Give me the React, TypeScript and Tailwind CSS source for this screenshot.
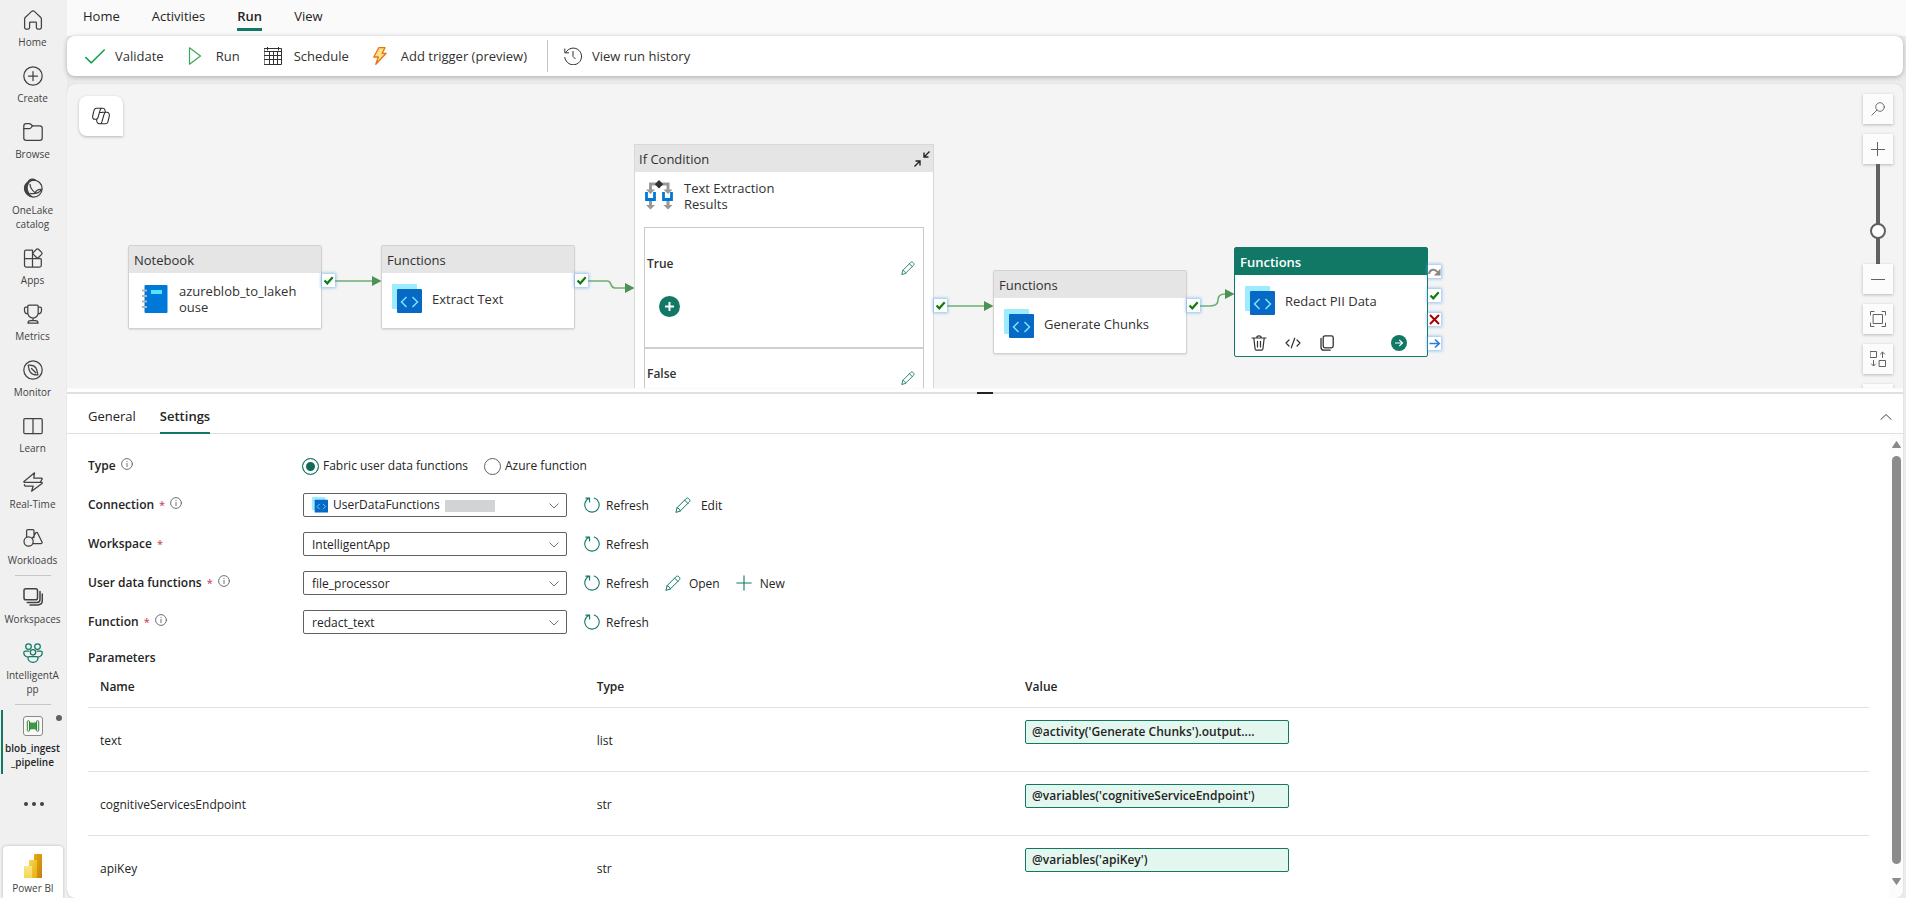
import React from "react";

type IconProps = { className?: string };

function Line({
  children,
  className = "size-5",
  box = "0 0 20 20",
  width = 1.25,
}: {
  children: React.ReactNode;
  className?: string;
  box?: string;
  width?: number;
}) {
  return (
    <svg
      viewBox={box}
      className={`shrink-0 ${className}`}
      fill="none"
      stroke="currentColor"
      strokeWidth={width}
      strokeLinecap="round"
      strokeLinejoin="round"
      aria-hidden="true"
    >
      {children}
    </svg>
  );
}

/* ---------- Navigation rail icons ---------- */

const HomeIcon = () => (
  <Line>
    <path d="M1.6 9c0-.6.2-1.1.6-1.5l6.2-5.9c.9-.9 2.3-.9 3.2 0l6.2 5.9c.4.4.6.9.6 1.5v8.6c0 .8-.6 1.4-1.4 1.4h-2.2c-.8 0-1.4-.6-1.4-1.4v-4.8c0-.5-.3-.8-.8-.8H7.4c-.5 0-.8.3-.8.8v4.8c0 .8-.6 1.4-1.4 1.4H3c-.8 0-1.4-.6-1.4-1.4z" />
  </Line>
);
const CreateIcon = () => (
  <Line>
    <circle cx="10" cy="10" r="9.2" />
    <path d="M10 5.5v9M5.5 10h9" />
  </Line>
);
const BrowseIcon = () => (
  <Line>
    <path d="M.8 4c0-1.300 1-2.300 2.300-2.300h3.300c.6 0 1 .2 1.400.6l1.500 1.500h7.600c1.300 0 2.300 1 2.300 2.300V16c0 1.300-1 2.300-2.300 2.300H3.100C1.800 18.300.8 17.300.8 16z" />
    <path d="M.8 6.700h5.400c.6 0 1-.2 1.400-.6l2-2.300" />
  </Line>
);
const OneLakeIcon = () => (
  <Line>
    <circle cx="10.5" cy="10.6" r="8.6" />
    <path
      d="M10.300 19.200C5.200 19 1 15.500.9 10.300.8 7.500 2.300 5.200 4.500 4 5 1.600 7.400.3 9.700.5c2 .1 3.500 1.200 4.200 2.600-3-.8-6.400.2-7.500 1.700-2 2.600-2.200 6.400-.6 9.200 1.200 2.200 2.700 3.800 4.500 5.200z"
      fill="currentColor"
      stroke="none"
    />
    <path d="M7 6.300c.3 3.300 2.400 6.400 5.400 8.700M7.500 15.500c4.200.6 8.800-.6 11.200-3.800M12.400 14.600c.8-2 3-3.400 6-3.200" />
  </Line>
);
const AppsIcon = () => (
  <Line>
    <path d="M1.500 3.800c0-1 .8-1.800 1.800-1.800H9.500v17H3.300c-1 0-1.800-.8-1.800-1.800zM1.500 10.500h16c.2 0 .8.300.8 1v5.700c0 1-.8 1.800-1.800 1.800H9.500" />
    <path
      d="M13.500 1.300a1.400 1.400 0 0 1 2 0l3.100 3.100a1.400 1.400 0 0 1 0 2l-3.100 3.100a1.400 1.400 0 0 1-2 0l-3.100-3.100a1.400 1.400 0 0 1 0-2z"
      fill="#f0f0f0"
    />
  </Line>
);
const MetricsIcon = () => (
  <Line>
    <path d="M4.800 2.300c0-.6.5-1.100 1.100-1.100h8.200c.6 0 1.100.5 1.100 1.100v6.500a5.200 5.200 0 0 1-10.400 0zM4.800 3H2.900c-.8 0-1.400.6-1.400 1.400v1.800c0 2 1.500 3.600 3.500 3.600M15.200 3h1.900c.8 0 1.400.6 1.400 1.400v1.800c0 2-1.500 3.600-3.500 3.600M10 14v2.500M7.500 16.500h5c1.400 0 2.500.8 2.500 2.700H5c0-1.900 1.100-2.700 2.500-2.700z" />
  </Line>
);
const MonitorIcon = () => (
  <Line>
    <circle cx="10" cy="10" r="9.2" />
    <path d="M5.200 5.200c3.600-.4 6.400.6 7.700 2.700 1.200 2 1.600 4.400 2 6.900-3.200.3-5.900-.4-7.500-2.500-1.400-1.900-1.900-4.500-2.200-7.100zM8.500 8.500l4.300 4.300" />
  </Line>
);
const LearnIcon = () => (
  <Line>
    <rect x=".8" y="2.6" width="18.4" height="15" rx="1.2" />
    <path d="M10 2.600v15" />
  </Line>
);
const RealTimeIcon = () => (
  <Line>
    <path d="M11.500.8 1 9.400c-.5.4-.2 1 .4 1h17.200c.7 0 .9.600.4 1L8.600 19.200l1.600-5.200H2.500c-1 0-1.400-.5-.9-1.300M11.500.8 10.800 6.200h7.800c.6 0 .8.500.5.9l-1.800 3.100" />
  </Line>
);
const WorkloadsIcon = () => (
  <Line>
    <circle cx="5.6" cy="13.5" r="4.600" />
    <path d="M3.600 9V2.800c0-.7.500-1.200 1.200-1.200h5c.7 0 1.200.5 1.200 1.200v6.800M9.200 10.700l3.700-6c.4-.6 1.100-.6 1.500 0L19 14c.4.800 0 1.500-.8 1.500h-7.900" />
  </Line>
);
const WorkspacesIcon = () => (
  <Line width={1.5}>
    <rect x="1" y="1.700" width="13.500" height="11" rx="1.800" />
    <path d="M17 4.500v8c0 1.700-1 2.900-2.900 2.900H4.200M19.300 7v6.300c0 2.800-1.600 4.600-4.500 4.600H7" />
  </Line>
);
const PeopleIcon = () => (
  <Line className="size-5 text-[#117865]">
    <circle cx="5.5" cy="3.6" r="2.8" />
    <circle cx="14.5" cy="3.6" r="2.8" />
    <circle cx="10" cy="9.3" r="2.700" />
    <path d="M5.800 8.200H2.300C1.400 8.200.8 8.800.8 9.600c0 2.100 1.500 4.200 4.200 4.500M14.200 8.200h3.500c.9 0 1.500.6 1.500 1.400 0 2.100-1.500 4.200-4.200 4.500M6.300 13.700h7.400c.8 0 1.300.5 1.300 1.300 0 2.500-2.200 4.300-5 4.300s-5-1.800-5-4.300c0-.8.500-1.300 1.300-1.300z" />
  </Line>
);
const PipelineIcon = () => (
  <svg viewBox="0 0 20 20" className="size-5 shrink-0" aria-hidden="true">
    <rect x=".5" y=".5" width="19" height="19" rx="2.5" fill="#f8f8f8" stroke="#8a8a8a" />
    <path d="M6 5.800c2 1.200 6 1.200 8 0v8.400c-2-1.200-6-1.200-8 0z" fill="#3f9a45" />
    <rect x="4.300" y="4.700" width="2.200" height="10.600" rx=".9" fill="#e9f5ea" stroke="#35813b" />
    <rect x="13.500" y="4.700" width="2.200" height="10.600" rx=".9" fill="#e9f5ea" stroke="#35813b" />
  </svg>
);
const PowerBiIcon = () => (
  <svg viewBox="0 0 20 24" className="h-6 w-5 shrink-0" aria-hidden="true">
    <defs>
      <linearGradient id="pbi-a" x1="0" y1="0" x2="1" y2="1">
        <stop stopColor="#e6ad10" />
        <stop offset="1" stopColor="#c87e0e" />
      </linearGradient>
      <linearGradient id="pbi-b" x1="0" y1="0" x2="1" y2="1">
        <stop stopColor="#f6d751" />
        <stop offset="1" stopColor="#e6ad10" />
      </linearGradient>
      <linearGradient id="pbi-c" x1="0" y1="0" x2="0" y2="1">
        <stop stopColor="#f9e589" />
        <stop offset="1" stopColor="#f6d751" />
      </linearGradient>
    </defs>
    <path d="M11 .5a.5.5 0 0 1 .5-.5h7a.5.5 0 0 1 .5.5V24h-8z" fill="url(#pbi-a)" />
    <path d="M6 6.500a.5.500 0 0 1 .5-.5h7a.5.500 0 0 1 .5.500V24H6z" fill="url(#pbi-b)" />
    <path d="M1 12.500a.5.500 0 0 1 .5-.5h7a.5.500 0 0 1 .5.500V24H1z" fill="url(#pbi-c)" />
  </svg>
);

/* ---------- Shared icons ---------- */

const PencilIcon = ({ className = "size-4" }: IconProps) => (
  <Line className={`text-[#117865] ${className}`} box="0 0 16 16" width={1}>
    <path d="M1 15l1.100-4.300L11 1.700c.8-.8 2-.8 2.800 0l.5.500c.8.8.8 2 0 2.800L5.300 13.900zM9.600 3.100l3.300 3.300M2.100 10.700c1.500.3 2.800 1.600 3.200 3.200" />
  </Line>
);
const RefreshIcon = () => (
  <Line className="size-4 text-[#117865]" box="0 0 16 16" width={1.1}>
    <path d="M5.200 1.300a7.200 7.200 0 1 0 5 -.2M1.800 1.100h3.800v3.800" />
  </Line>
);
const PlusIcon = ({ className = "size-4" }: IconProps) => (
  <Line className={className} box="0 0 16 16" width={1.1}>
    <path d="M8 .8v14.400M.8 8h14.400" />
  </Line>
);
const InfoIcon = () => (
  <Line className="size-3 text-[#616161]" box="0 0 12 12" width={0.9}>
    <circle cx="6" cy="6" r="5.400" />
    <path d="M6 5.300v3.300M6 3.300v.2" />
  </Line>
);
const FunctionIcon = ({ className = "size-[30px]" }: IconProps) => (
  <svg viewBox="0 0 30 30" className={`shrink-0 ${className}`} aria-hidden="true">
    <rect width="25" height="25" rx="1" fill="#9cebff" />
    <rect x="5" y="5" width="25" height="24" rx="1" fill="#0669c5" />
    <path d="M14.500 13 9.500 18l5 5M20.500 13l5 5-5 5" fill="none" stroke="#7fe3ff" strokeWidth="1.5" />
  </svg>
);
const NotebookIcon = () => (
  <svg viewBox="0 0 26 28" className="h-7 w-[26px] shrink-0" aria-hidden="true">
    <rect x="2.5" width="23" height="28" rx="1" fill="#0078d7" />
    <path d="M9 5h11v4H9z" fill="#50e6ff" />
    <path d="M0 5.500h5M0 11h5M0 16.500h5M0 22h5" stroke="#b3b3b3" strokeWidth="1.800" />
  </svg>
);
const BranchIcon = () => (
  <svg viewBox="0 0 28 30" className="h-[30px] w-7 shrink-0" aria-hidden="true">
    <path d="M12 4H5.500v6M16 4h7v6" fill="none" stroke="#999" strokeWidth="3" />
    <path d="M1 9.500h9L5.500 14zM18.500 9.500h9L23 14zM1 25h9l-4.500 4.500zM18.500 25h9L23 29.500z" fill="#999" />
    <path d="M5.500 20v6M23 20v6" stroke="#999" strokeWidth="3" />
    <path d="M1.500 12v7.500h8V12M18.500 12v7.500h8V12" fill="none" stroke="#0078d7" strokeWidth="2.800" />
    <path d="M14 0l4.200 4.200L14 8.400 9.800 4.200z" fill="#333" />
  </svg>
);

/* ---------- Navigation rail ---------- */

type RailItem = { label: string; Icon: () => React.JSX.Element };

const mainItems: RailItem[] = [
  { label: "Home", Icon: HomeIcon },
  { label: "Create", Icon: CreateIcon },
  { label: "Browse", Icon: BrowseIcon },
  { label: "OneLake catalog", Icon: OneLakeIcon },
  { label: "Apps", Icon: AppsIcon },
  { label: "Metrics", Icon: MetricsIcon },
  { label: "Monitor", Icon: MonitorIcon },
  { label: "Learn", Icon: LearnIcon },
  { label: "Real-Time", Icon: RealTimeIcon },
  { label: "Workloads", Icon: WorkloadsIcon },
];
const workspaceItems: RailItem[] = [
  { label: "Workspaces", Icon: WorkspacesIcon },
  { label: "IntelligentApp", Icon: PeopleIcon },
];

function RailButton({ item, active = false }: { item: RailItem; active?: boolean }) {
  return (
    <button
      type="button"
      className={`relative flex w-full flex-col items-center gap-[5px] pt-2.5 pr-1.5 pb-[7px] pl-1 text-[10px] leading-[14px] ${
        active ? "font-semibold text-[#242424]" : "text-[#424242]"
      }`}
    >
      <item.Icon />
      <span className="max-w-full text-center break-words">{item.label}</span>
      {active && (
        <>
          <span className="absolute top-1 bottom-0.5 left-px w-0.5 bg-[#117865]" />
          <span className="absolute top-[9px] right-[5px] size-1.5 rounded-full bg-[#616161]" />
        </>
      )}
    </button>
  );
}

const RailDivider = () => <div className="mx-[15px] my-px h-px w-9 shrink-0 bg-[#c7c7c7]" />;

function Rail() {
  return (
    <nav className="flex w-[67px] shrink-0 flex-col overflow-hidden bg-[#f0f0f0]">
      {mainItems.map((item) => (
        <RailButton key={item.label} item={item} />
      ))}
      <RailDivider />
      {workspaceItems.map((item) => (
        <RailButton key={item.label} item={item} />
      ))}
      <RailDivider />
      <RailButton item={{ label: "blob_ingest _pipeline", Icon: PipelineIcon }} active />
      <button type="button" aria-label="More" className="mt-[18px] flex h-5 items-center justify-center gap-1">
        <span className="size-1 rounded-full bg-[#424242]" />
        <span className="size-1 rounded-full bg-[#424242]" />
        <span className="size-1 rounded-full bg-[#424242]" />
      </button>
      <button
        type="button"
        className="mt-auto mr-1 ml-[3px] flex flex-col items-center gap-[3px] rounded-t bg-white pt-2 pb-[3px] text-[10px] leading-[14px] text-[#424242] shadow-[0_0_3px_rgba(0,0,0,0.25)]"
      >
        <PowerBiIcon />
        Power BI
      </button>
    </nav>
  );
}

/* ---------- Ribbon ---------- */

const ribbonTabs = ["Home", "Activities", "Run", "View"];

function RibbonTabs() {
  return (
    <div className="flex h-9 shrink-0 items-start gap-8 bg-[#fafafa] px-4 pt-1 text-[13px] leading-6 text-[#242424]">
      {ribbonTabs.map((tab) => (
        <button
          type="button"
          key={tab}
          className={tab === "Run" ? "border-b-3 border-[#117865] font-semibold" : "border-b-3 border-transparent"}
        >
          {tab}
        </button>
      ))}
    </div>
  );
}

function Action({ icon, label, pad }: { icon: React.ReactNode; label: string; pad: string }) {
  return (
    <button type="button" className={`flex items-center ${pad}`}>
      {icon}
      <span className="pt-0.5">{label}</span>
    </button>
  );
}

function Ribbon() {
  return (
    <div className="relative mr-[3px] flex h-10 shrink-0 items-center gap-6 rounded-lg bg-white px-[18px] text-[13px] text-[#323130] shadow-[0_1px_5px_rgba(0,0,0,0.28)]">
      <Action
        label="Validate"
        pad="gap-2.5"
        icon={
          <Line className="size-5 text-[#13a04b]" width={1.6}>
            <path d="M.8 11.500 6.300 16.800 19.200 4" />
          </Line>
        }
      />
      <Action
        label="Run"
        pad="gap-3.5"
        icon={
          <Line className="h-[18px] w-3.5 text-[#3aa655]" box="0 0 14 18" width={1.2}>
            <path d="M1.500.8v16.400L12.500 9z" />
          </Line>
        }
      />
      <Action
        label="Schedule"
        pad="gap-3"
        icon={
          <Line className="size-[18px]" box="0 0 18 18" width={1}>
            <path d="M.5 1.500h17v16H.5zM.5 4.500h17M3.500 0v3M14.500 0v3M.5 8.500h17M.5 12.500h17M5.500 4.500v13M9.500 4.500v13M13.500 4.500v13" />
          </Line>
        }
      />
      <Action
        label="Add trigger (preview)"
        pad="gap-3.5"
        icon={
          <svg viewBox="0 0 14 18" className="h-[18px] w-3.5 shrink-0" aria-hidden="true">
            <path
              d="M5.800.7H12L9.200 6.300h4L2.800 17.300 5.300 10H.8z"
              fill="#fde08a"
              stroke="#e8720c"
              strokeWidth="1.300"
              strokeLinejoin="round"
            />
          </svg>
        }
      />
      <span className="-mx-1 h-8 w-px bg-[#c8c6c4]" />
      <Action
        label="View run history"
        pad="-ml-1 gap-2.5"
        icon={
          <Line className="size-[18px]" box="0 0 18 18" width={1}>
            <path d="M1.700 5.500a8.400 8.400 0 1 1-.9 5M.8 2v3.800h3.800M9 4.500v5l2.300 2.300" />
          </Line>
        }
      />
    </div>
  );
}

/* ---------- Pipeline canvas ---------- */

function Port({ kind, place }: { kind: "skip" | "ok" | "fail" | "done"; place: string }) {
  return (
    <span
      className={`absolute flex size-[13px] items-center justify-center bg-white shadow-[0_0_3px_1px_rgba(80,160,235,0.6)] ${place}`}
    >
      <svg viewBox="0 0 13 13" className="size-[13px]" fill="none" aria-hidden="true">
        {kind === "ok" && <path d="M2.500 6.500 5.300 9.300 10.700 3.300" stroke="#107c10" strokeWidth="2.200" />}
        {kind === "fail" && <path d="M2 2l9 9M11 2l-9 9" stroke="#a80000" strokeWidth="2" />}
        {kind === "skip" && (
          <>
            <path d="M1 9c.5-4.500 5.500-6 8.500-2" stroke="#8a8886" strokeWidth="2" />
            <path d="M12.500 3.500v7H6z" fill="#8a8886" />
          </>
        )}
        {kind === "done" && <path d="M1.500 6.500h9.500M7 2.500l4.200 4L7 10.500" stroke="#2b7cd3" strokeWidth="1.700" />}
      </svg>
    </span>
  );
}

function Activity({
  type,
  name,
  icon,
  place,
  selected = false,
}: {
  type: string;
  name: string;
  icon: React.ReactNode;
  place: string;
  selected?: boolean;
}) {
  return (
    <div
      className={`absolute flex w-[194px] flex-col rounded-xs border bg-white text-[13px] ${
        selected ? "border-[#117865]" : "border-[#d1d1d1] shadow-[0_1px_2px_rgba(0,0,0,0.1)]"
      } ${place}`}
    >
      <div
        className={`flex h-[27px] shrink-0 items-center px-[5px] pt-0.5 ${
          selected ? "bg-[#117865] font-semibold text-white" : "bg-[#e5e5e5] text-[#323130]"
        }`}
      >
        {type}
      </div>
      <div className="flex h-[52px] items-center gap-2.5 px-2.5 leading-4 text-[#323130]">
        {icon}
        <span className="w-[122px] break-all">{name}</span>
      </div>
      {selected && (
        <div className="flex items-center px-4 pt-2 text-[#323130]">
          <button type="button" aria-label="Delete" className="mr-[18px]">
            <Line className="size-4" box="0 0 16 16" width={1.2}>
              <path d="M1 3h14M2.800 3l1.300 11c.1.700.6 1.200 1.300 1.200h5.200c.7 0 1.200-.5 1.300-1.200L13.200 3M5.800 2.800c0-1.300.8-2 2.200-2s2.200.7 2.200 2M6.500 6.300v5.700M9.500 6.300v5.700" />
            </Line>
          </button>
          <button type="button" aria-label="View code" className="mr-[18px]">
            <Line className="size-4" box="0 0 16 16" width={1.2}>
              <path d="M4 5 1 8l3 3M12 5l3 3-3 3M9.700 3.200 6.300 12.800" />
            </Line>
          </button>
          <button type="button" aria-label="Clone" className="mr-auto">
            <Line className="size-4" box="0 0 16 16" width={1.3}>
              <rect x="4.200" y=".8" width="10" height="12" rx="1.800" />
              <path d="M2 3.500v8.700c0 1.700 1.200 3 3 3h6.200" />
            </Line>
          </button>
          <button type="button" aria-label="Open" className="mr-1">
            <svg viewBox="0 0 16 16" className="size-4" fill="none" aria-hidden="true">
              <circle cx="8" cy="8" r="8" fill="#117865" />
              <path d="M4 8h7.500M8.300 4.800 11.500 8l-3.200 3.200" stroke="#fff" strokeWidth="1.200" />
            </svg>
          </button>
        </div>
      )}
    </div>
  );
}

function Condition() {
  return (
    <div className="absolute top-[60px] left-[567px] w-[300px] border border-[#d8d8d8] bg-white text-[13px] text-[#323130]">
      <div className="flex h-[27px] items-center justify-between bg-[#e5e5e5] pr-[3px] pl-1">
        <span className="pt-0.5">If Condition</span>
        <button type="button" aria-label="Collapse">
          <svg viewBox="0 0 16 16" className="size-4" fill="none" stroke="#242424" strokeWidth="1.400" aria-hidden="true">
            <path d="M15.500.5 10.500 5.500M10 1.500V6h4.500M.5 15.500 5.500 10.500M1.500 10H6v4.500" />
          </svg>
        </button>
      </div>
      <div className="flex h-[55px] items-start gap-[11px] pt-2 pl-2.5">
        <BranchIcon />
        <span className="w-[110px] leading-4">Text Extraction Results</span>
      </div>
      <div className="mx-[9px] h-[260px] border border-[#c8c8c8] text-xs font-semibold">
        <div className="h-[121px] border-b-2 border-[#d0d0d0] pt-7 pr-2 pl-0.5">
          <div className="flex items-start justify-between">
            <span className="leading-4">True</span>
            <button type="button" aria-label="Edit True activities" className="pt-[5px]">
              <PencilIcon className="size-3.5" />
            </button>
          </div>
          <button type="button" aria-label="Add activity" className="mt-[21px] ml-3 block">
            <svg viewBox="0 0 21 21" className="size-[21px]" aria-hidden="true">
              <circle cx="10.5" cy="10.5" r="10.500" fill="#117865" />
              <path d="M10.500 6v9M6 10.500h9" stroke="#fff" strokeWidth="2" />
            </svg>
          </button>
        </div>
        <div className="flex items-start justify-between pt-[17px] pr-2 pl-0.5">
          <span className="leading-4">False</span>
          <button type="button" aria-label="Edit False activities" className="pt-[5px]">
            <PencilIcon className="size-3.5" />
          </button>
        </div>
      </div>
    </div>
  );
}

function Connectors() {
  return (
    <svg className="absolute top-0 left-0 h-[304px] w-[1300px]" fill="none" aria-hidden="true">
      <g stroke="#6fae74" strokeWidth="1.600">
        <path d="M268 197h38" />
        <path d="M521 197h19q3 0 4 3.500t4 3.500h12" />
        <path d="M880 222h38" />
        <path d="M1133 222h10q8 0 8-6t7-6h3" />
      </g>
      <g fill="#4a9255">
        <path d="M305 192v10l9.500-5z" />
        <path d="M558 199v10l9.500-5z" />
        <path d="M917 217v10l9.500-5z" />
        <path d="M1158 205v10l9.500-5z" />
      </g>
    </svg>
  );
}

function ZoomButton({ label, children }: { label: string; children: React.ReactNode }) {
  return (
    <button
      type="button"
      aria-label={label}
      className="flex size-[30px] shrink-0 items-center justify-center bg-[#fcfcfc] text-[#616161] shadow-[0_1px_3px_rgba(0,0,0,0.25)]"
    >
      {children}
    </button>
  );
}

function ZoomControls() {
  return (
    <div className="absolute top-2.5 right-2.5 flex flex-col items-center gap-2.5">
      <ZoomButton label="Search">
        <Line className="size-3.5" box="0 0 14 14" width={0.9}>
          <circle cx="9" cy="5" r="4.300" />
          <path d="M6 8 .8 13.200" />
        </Line>
      </ZoomButton>
      <div className="flex flex-col items-center">
        <ZoomButton label="Zoom in">
          <Line className="size-3.5" box="0 0 14 14" width={1}>
            <path d="M6.500 0v14M0 7.500h14" />
          </Line>
        </ZoomButton>
        <input
          type="range"
          aria-label="Zoom"
          defaultValue={30}
          className="h-[100px] w-4 appearance-none bg-transparent [direction:rtl] [writing-mode:vertical-lr] [&::-webkit-slider-runnable-track]:h-full [&::-webkit-slider-runnable-track]:w-1 [&::-webkit-slider-runnable-track]:bg-[#616161] [&::-webkit-slider-thumb]:-ml-1.5 [&::-webkit-slider-thumb]:size-4 [&::-webkit-slider-thumb]:appearance-none [&::-webkit-slider-thumb]:rounded-full [&::-webkit-slider-thumb]:border-2 [&::-webkit-slider-thumb]:border-[#616161] [&::-webkit-slider-thumb]:bg-white"
        />
        <ZoomButton label="Zoom out">
          <Line className="size-3.5" box="0 0 14 14" width={1}>
            <path d="M0 7.500h14" />
          </Line>
        </ZoomButton>
      </div>
      <ZoomButton label="Zoom to fit">
        <Line className="size-4" box="0 0 16 16" width={1}>
          <path d="M3.500 3.500h9v9h-9zM.5 4V.5H4M12 .5h3.500V4M15.500 12v3.500H12M4 15.500H.5V12" />
        </Line>
      </ZoomButton>
      <ZoomButton label="Auto align">
        <Line className="size-4" box="0 0 16 16" width={1}>
          <path d="M.5.5h6v6h-6zM9.500 9.500h6v6h-6zM12.500 6.500v-5M10.500 3l2-2 2 2M3.500 9.500v5M1.500 13l2 2 2-2" />
        </Line>
      </ZoomButton>
      <ZoomButton label="More view options">{null}</ZoomButton>
    </div>
  );
}

function Canvas() {
  return (
    <section className="relative mt-2 mr-[3px] h-[304px] shrink-0 overflow-hidden rounded-t-lg bg-[#f4f4f4] shadow-[0_0_1px_rgba(0,0,0,0.2)]">
      <button
        type="button"
        aria-label="Copilot"
        className="absolute top-3 left-3 flex h-10 w-11 items-center justify-center rounded-lg rounded-br-none bg-white text-[#323130] shadow-[0_1px_3px_rgba(0,0,0,0.25)]"
      >
        <Line className="size-[18px]" box="0 0 18 18" width={1.1}>
          <path d="M4.500 1.200h6.300c1.300 0 1.900.8 2.200 1.900l.3 1.200M4.500 1.200c-1.300 0-2 .8-2.400 2L.8 8.500c-.6 2.500.4 3.800 2.400 3.800h1.600M10.200 1.200c-1 0-1.700.6-2 1.700L6 10.500c-.4 1.200-1 1.800-2 1.800M13.500 16.800H7.200c-1.300 0-1.900-.8-2.200-1.900l-.6-2.600M13.500 16.800c1.300 0 2-.8 2.400-2l1.300-5.300c.6-2.500-.4-4.200-2.400-4.200H10M7.800 16.800c1 0 1.700-.6 2-1.700L12 7.500c.4-1.200 1-2.200 2-2.200M8 5.500h2.500" />
        </Line>
      </button>
      <Connectors />
      <Activity
        type="Notebook"
        name="azureblob_to_lakehouse"
        icon={
          <span className="w-[30px] shrink-0 pl-[3px]">
            <NotebookIcon />
          </span>
        }
        place="top-[161px] left-[61px] h-[84px]"
      />
      <Activity type="Functions" name="Extract Text" icon={<FunctionIcon />} place="top-[161px] left-[314px] h-[84px]" />
      <Condition />
      <Activity type="Functions" name="Generate Chunks" icon={<FunctionIcon />} place="top-[186px] left-[926px] h-[84px]" />
      <Activity
        type="Functions"
        name="Redact PII Data"
        icon={<FunctionIcon />}
        place="top-[163px] left-[1167px] h-[110px]"
        selected
      />
      <Port kind="ok" place="top-[190px] left-[255px]" />
      <Port kind="ok" place="top-[190px] left-[508px]" />
      <Port kind="ok" place="top-[215px] left-[867px]" />
      <Port kind="ok" place="top-[215px] left-[1120px]" />
      <Port kind="skip" place="top-[181px] left-[1361px]" />
      <Port kind="ok" place="top-[205px] left-[1361px]" />
      <Port kind="fail" place="top-[229px] left-[1361px]" />
      <Port kind="done" place="top-[253px] left-[1361px]" />
      <ZoomControls />
    </section>
  );
}

/* ---------- Settings panel ---------- */

function FieldLabel({ id, text, required, info }: { id?: string; text: string; required?: boolean; info?: boolean }) {
  return (
    <label htmlFor={id} className="flex h-5 w-[215px] shrink-0 items-center gap-[5px] font-semibold">
      {text}
      {required && <span className="text-[11px] font-normal text-[#c4314b]">*</span>}
      {info && (
        <span className="self-start pt-0.5">
          <InfoIcon />
        </span>
      )}
    </label>
  );
}

function Picker({ id, value, connection = false }: { id: string; value: string; connection?: boolean }) {
  return (
    <div className="relative w-[264px] shrink-0">
      <select
        id={id}
        defaultValue={value}
        className={`block h-6 w-full appearance-none rounded-xs border border-[#616161] bg-white pr-7 text-xs text-[#242424] ${
          connection ? "pl-[29px]" : "pt-0.5 pl-2"
        }`}
      >
        <option>{value}</option>
      </select>
      {connection && (
        <>
          <FunctionIcon className="pointer-events-none absolute top-1 left-[9px] size-4" />
          <span className="pointer-events-none absolute top-[7px] left-[142px] h-3 w-[50px] bg-[#d2d3d5]" />
        </>
      )}
      <Line className="pointer-events-none absolute top-2.5 right-2 h-1.5 w-2.5 text-[#616161]" box="0 0 10 6" width={0.9}>
        <path d="M.8.8 5 5 9.200.8" />
      </Line>
    </div>
  );
}

const RefreshAction = () => <Action icon={<RefreshIcon />} label="Refresh" pad="ml-[17px] gap-1.5" />;

function Radio({ id, label, checked = false }: { id: string; label: string; checked?: boolean }) {
  return (
    <label htmlFor={id} className="mr-[17px] flex items-center gap-1">
      <input
        type="radio"
        id={id}
        name="function-type"
        defaultChecked={checked}
        className="-ml-px size-[17px] appearance-none rounded-full border border-[#616161] bg-white checked:border-[#117865] checked:bg-[#0f6b5a] checked:shadow-[inset_0_0_0_3px_white]"
      />
      {label}
    </label>
  );
}

const parameters = [
  { name: "text", type: "list", value: "@activity('Generate Chunks').output...." },
  { name: "cognitiveServicesEndpoint", type: "str", value: "@variables('cognitiveServiceEndpoint')" },
  { name: "apiKey", type: "str", value: "@variables('apiKey')" },
];

function Settings() {
  return (
    <section className="mr-[3px] flex min-h-0 flex-1 flex-col overflow-hidden rounded-b-lg bg-white pt-1 text-[#242424] shadow-[0_0_1px_rgba(0,0,0,0.3)]">
      <div className="flex h-0.5 shrink-0 justify-center bg-[#e0e0e0]">
        <span className="w-4 bg-[#242424]" />
      </div>
      <div className="flex h-10 shrink-0 items-stretch gap-6 border-b border-[#e0e0e0] pr-[11px] pl-[21px] text-[13px]">
        <button type="button" className="pt-1.5">
          General
        </button>
        <button type="button" className="-mb-px border-b-2 border-[#117865] pt-2 font-semibold">
          Settings
        </button>
        <button type="button" aria-label="Collapse panel" className="ml-auto pt-1.5 text-[#424242]">
          <Line className="h-1.5 w-3" box="0 0 12 6" width={1}>
            <path d="M.8 5.500 6 .5l5.200 5" />
          </Line>
        </button>
      </div>
      <div className="flex min-h-0 flex-1">
        <div className="min-w-0 flex-1 overflow-hidden pt-5 pr-5 pl-[21px] text-xs">
          <div className="flex flex-col gap-[15px]">
            <div className="flex h-6 items-center">
              <FieldLabel text="Type" info />
              <Radio id="fabric" label="Fabric user data functions" checked />
              <Radio id="azure" label="Azure function" />
            </div>
            <div className="flex h-6 items-center">
              <FieldLabel id="connection" text="Connection" required info />
              <Picker id="connection" value="UserDataFunctions" connection />
              <RefreshAction />
              <Action icon={<PencilIcon />} label="Edit" pad="ml-[26px] gap-2.5" />
            </div>
            <div className="flex h-6 items-center">
              <FieldLabel id="workspace" text="Workspace" required />
              <Picker id="workspace" value="IntelligentApp" />
              <RefreshAction />
            </div>
            <div className="flex h-6 items-center">
              <FieldLabel id="udf" text="User data functions" required info />
              <Picker id="udf" value="file_processor" />
              <RefreshAction />
              <Action icon={<PencilIcon />} label="Open" pad="ml-4 gap-2" />
              <Action icon={<PlusIcon className="size-4 text-[#117865]" />} label="New" pad="ml-4 gap-2" />
            </div>
            <div className="flex h-6 items-center">
              <FieldLabel id="function" text="Function" required info />
              <Picker id="function" value="redact_text" />
              <RefreshAction />
            </div>
          </div>
          <h2 className="mt-3.5 leading-5 font-semibold">Parameters</h2>
          <table className="w-full table-fixed border-collapse text-left">
            <thead>
              <tr className="h-[39px] border-b border-[#e0e0e0]">
                <th className="w-[28%] px-3 font-semibold">Name</th>
                <th className="w-[24%] px-2.5 font-semibold">Type</th>
                <th className="px-[11px] font-semibold">Value</th>
              </tr>
            </thead>
            <tbody>
              {parameters.map((row) => (
                <tr key={row.name} className="h-16 border-b border-[#e0e0e0]">
                  <td className="px-3 pt-1">{row.name}</td>
                  <td className="px-2.5 pt-1">{row.type}</td>
                  <td className="px-[11px] pt-3 align-top">
                    <input
                      type="text"
                      readOnly
                      aria-label={`Value of ${row.name}`}
                      value={row.value}
                      className="block h-6 w-[264px] rounded-xs border border-[#117865] bg-[#e3f7ef] px-1.5 font-semibold"
                    />
                  </td>
                </tr>
              ))}
            </tbody>
          </table>
        </div>
        <div className="flex w-3.5 shrink-0 flex-col items-center gap-2 bg-[#fcfcfc] pt-[7px] pb-[13px]" aria-hidden="true">
          <svg viewBox="0 0 9 7" className="h-[7px] w-[9px] shrink-0">
            <path d="M4.500.5 8.500 6.500h-8z" fill="#8a8a8a" stroke="#8a8a8a" strokeLinejoin="round" />
          </svg>
          <span className="mb-1.5 w-[9px] flex-1 rounded-full bg-[#8b8b8b]" />
          <svg viewBox="0 0 9 7" className="h-[7px] w-[9px] shrink-0">
            <path d="M4.500 6.500.5.500h8z" fill="#8a8a8a" stroke="#8a8a8a" strokeLinejoin="round" />
          </svg>
        </div>
      </div>
    </section>
  );
}

export default function App() {
  return (
    <div className="flex h-screen overflow-hidden bg-[#ebebeb] font-['Segoe_UI','Open_Sans',sans-serif]">
      <Rail />
      <main className="flex min-w-0 flex-1 flex-col">
        <RibbonTabs />
        <Ribbon />
        <Canvas />
        <Settings />
      </main>
    </div>
  );
}
